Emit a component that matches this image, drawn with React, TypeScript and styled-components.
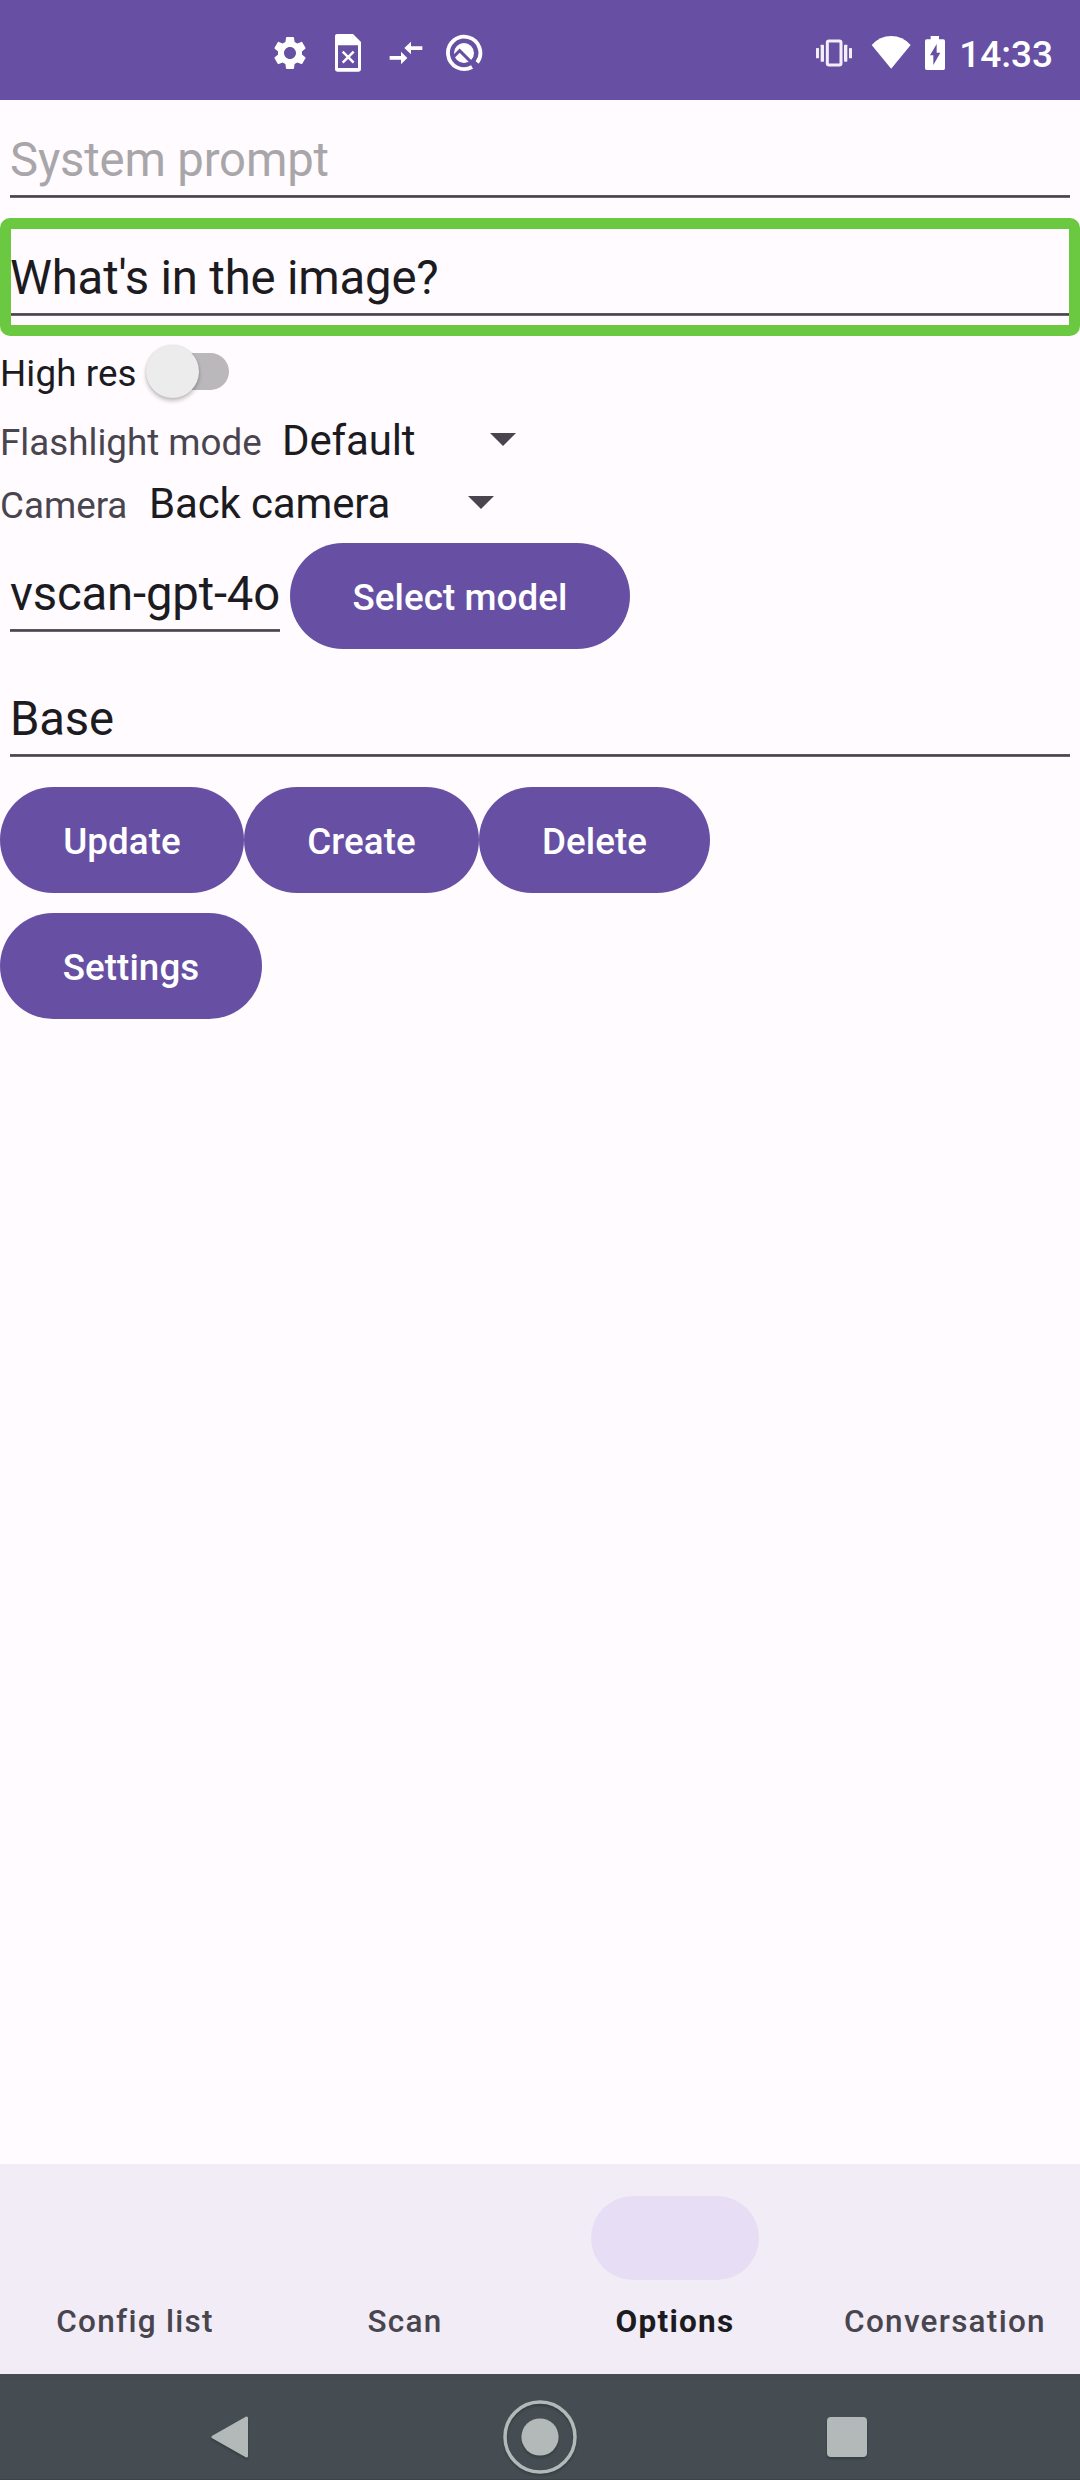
import React from "react";
import styled, { createGlobalStyle } from "styled-components";

const GlobalStyle = createGlobalStyle`
  *, *::before, *::after { box-sizing: border-box; }
  html, body { margin: 0; padding: 0; background: #fffbff; }
  body { font-family: Roboto, "Noto Sans", sans-serif; }
`;

const Screen = styled.div`
  width: 1080px;
  height: 2480px;
  display: flex;
  flex-direction: column;
  overflow: hidden;
  background: #fffbff;
  color: #1c1b1f;
`;

const StatusBar = styled.header`
  height: 100px;
  flex: none;
  display: flex;
  align-items: center;
  justify-content: space-between;
  padding: 6px 27px 0 270px;
  background: #6750a3;
  color: #fff;
`;

const StatusGroup = styled.div<{ $gap: number }>`
  display: flex;
  align-items: center;
  gap: ${(p) => p.$gap}px;
  svg { display: block; flex: none; }
`;

const Clock = styled.span`
  font-size: 37px;
  line-height: 44px;
  font-weight: 500;
  padding-top: 3px;
`;

const Form = styled.main`
  flex: 1;
  display: flex;
  flex-direction: column;
`;

const Field = styled.div<{ $width?: number; $hint?: boolean }>`
  flex: none;
  width: ${(p) => (p.$width ? `${p.$width}px` : "auto")};
  height: 98px;
  margin: 0 10px 20px;
  padding: 32px 0 0;
  font-size: 47.25px;
  line-height: 56px;
  letter-spacing: -0.16px;
  white-space: nowrap;
  color: ${(p) => (p.$hint ? "#a8a6a9" : "#1c1b1f")};
  background: linear-gradient(#5a5660 0 1px, #49454f 1px 2px, #6b6771 2px 3px) 0 95px / 100% 3px no-repeat;
`;

const Highlight = styled.div`
  position: relative;
  display: flex;
  flex-direction: column;
  &::after {
    content: "";
    position: absolute;
    inset: 0;
    border: 11px solid #6ac940;
    border-radius: 10px;
  }
`;

const SwitchRow = styled.label`
  height: 72px;
  flex: none;
  display: flex;
  align-items: flex-start;
  font-size: 36.75px;
  line-height: 75px;
  letter-spacing: 0.12px;
`;

const SwitchTrack = styled.span`
  width: 74px;
  height: 37px;
  margin: 17px 0 0 18px;
  border-radius: 19px;
  background: #bab8ba;
  display: flex;
  align-items: center;
`;

const SwitchThumb = styled.span`
  flex: none;
  width: 53px;
  height: 53px;
  margin-left: -9px;
  border-radius: 50%;
  background: #ececec;
  box-shadow: 0 3px 4px rgba(0, 0, 0, 0.24), 0 0 2px rgba(0, 0, 0, 0.12);
`;

const SpinnerRow = styled.div`
  height: 63px;
  flex: none;
  display: flex;
  align-items: flex-start;
`;

const SpinnerLabel = styled.span<{ $width: number }>`
  width: ${(p) => p.$width}px;
  font-size: 36.75px;
  line-height: 69px;
  color: #49454f;
  white-space: nowrap;
`;

const Spinner = styled.div<{ $width: number }>`
  width: ${(p) => p.$width}px;
  display: flex;
  justify-content: space-between;
  font-size: 42px;
  line-height: 66px;
  letter-spacing: -0.15px;
`;

const Caret = styled.span`
  margin-top: 25px;
  width: 26px;
  height: 13px;
  background: #49454f;
  clip-path: polygon(0 0, 100% 0, 50% 100%);
`;

const ModelRow = styled.div`
  height: 125px;
  flex: none;
  display: flex;
`;

const Button = styled.button<{ $width: number }>`
  flex: none;
  width: ${(p) => p.$width}px;
  height: 106px;
  padding: 3px 0 0;
  border: 0;
  border-radius: 53px;
  background: #6750a3;
  color: #fff;
  font-family: inherit;
  font-size: 36.75px;
  font-weight: 500;
  letter-spacing: 0.08px;
  line-height: 44px;
`;

const ModelButton = styled(Button)`
  margin-top: 9px;
`;

const ButtonRow = styled.div<{ $top: number }>`
  display: flex;
  margin-top: ${(p) => p.$top}px;
`;

const Tabs = styled.nav`
  flex: none;
  height: 210px;
  display: grid;
  grid-template-columns: repeat(4, 1fr);
  background: #f1ecf6;
`;

const Tab = styled.div<{ $active?: boolean }>`
  display: flex;
  flex-direction: column;
  align-items: center;
  padding-top: 32px;
  font-size: 31.5px;
  line-height: 39px;
  letter-spacing: 1.27px;
  white-space: nowrap;
  font-weight: ${(p) => (p.$active ? 700 : 500)};
  color: ${(p) => (p.$active ? "#1c1b1f" : "#49454f")};
`;

const Indicator = styled.span<{ $active?: boolean }>`
  width: 168px;
  height: 84px;
  margin-bottom: 22px;
  border-radius: 42px;
  background: ${(p) => (p.$active ? "#e7def6" : "transparent")};
`;

const SystemNav = styled.footer`
  flex: none;
  height: 106px;
  display: flex;
  align-items: center;
  justify-content: space-between;
  padding: 20px 210px 0 206px;
  background: #454d52;
  border-bottom: 1px solid #3d4448;
  svg {
    display: block;
    filter: drop-shadow(0 2px 1px rgba(0, 0, 0, 0.2));
  }
`;

const HomeButton = styled.div`
  margin-left: 4px;
`;

const tabs = ["Config list", "Scan", "Options", "Conversation"];

const GearIcon = () => (
  <svg width="40" height="40" viewBox="0 0 24 24" fill="#fff">
    <path d="M19.14 12.94c.04-.3.06-.61.06-.94 0-.32-.02-.64-.07-.94l2.03-1.58c.18-.14.23-.41.12-.61l-1.92-3.32c-.12-.22-.37-.29-.59-.22l-2.39.96c-.5-.38-1.03-.7-1.62-.94l-.36-2.54c-.04-.24-.24-.41-.48-.41h-3.84c-.24 0-.43.17-.47.41l-.36 2.54c-.59.24-1.13.57-1.62.94l-2.39-.96c-.22-.08-.47 0-.59.22L2.74 8.87c-.12.21-.08.47.12.61l2.03 1.58c-.05.3-.09.63-.09.94s.02.64.07.94l-2.03 1.58c-.18.14-.23.41-.12.61l1.92 3.32c.12.22.37.29.59.22l2.39-.96c.5.38 1.03.7 1.62.94l.36 2.54c.05.24.24.41.48.41h3.84c.24 0 .44-.17.47-.41l.36-2.54c.59-.24 1.13-.56 1.62-.94l2.39.96c.22.08.47 0 .59-.22l1.92-3.32c.12-.22.07-.47-.12-.61l-2.01-1.58zM12 15.6c-1.98 0-3.6-1.62-3.6-3.6s1.62-3.6 3.6-3.6 3.6 1.62 3.6 3.6-1.62 3.6-3.6 3.6z" />
  </svg>
);

const SimIcon = () => (
  <svg width="40" height="40" viewBox="234 99 120 120">
    <path
      fill="#fff"
      fillRule="evenodd"
      d="M261 102H309L333 126V208Q333 215 326 215H262Q255 215 255 208V108Q255 102 261 102ZM264 136V204H324V136Z"
    />
    <path d="M278 155L311 188M311 155L278 188" stroke="#fff" strokeWidth="7.5" fill="none" />
  </svg>
);

const ArrowsIcon = () => (
  <svg width="40" height="40" viewBox="408 99 120 120" fill="#fff">
    <path d="M463 144L483 125V139H517V150H483V163Z" />
    <path d="M472 174L453 193V179H419V168H453V155Z" />
  </svg>
);

const RingIcon = () => (
  <svg width="40" height="40" viewBox="582 98 120 120">
    <path d="M681.5 186.500A48.500 48.500 0 1 0 666.200 200" fill="none" stroke="#fff" strokeWidth="11.500" />
    <circle cx="642" cy="158" r="30" fill="#fff" />
    <path d="M608 172L629 151L677 199" fill="none" stroke="#6750a3" strokeWidth="9" />
  </svg>
);

const VibrateIcon = () => (
  <svg width="40" height="40" viewBox="39 96 120 120" fill="#f3effa">
    <rect x="79" y="120" width="41" height="72" rx="5" fill="none" stroke="#f3effa" strokeWidth="9" />
    <rect x="59" y="131" width="10" height="51" rx="2" />
    <rect x="45" y="141" width="9" height="31" rx="2" />
    <rect x="129" y="131" width="10" height="51" rx="2" />
    <rect x="144" y="141" width="9" height="31" rx="2" />
  </svg>
);

const WifiIcon = () => (
  <svg width="40" height="40" viewBox="211 96 120 120" fill="#fff">
    <path d="M271.500 203L213 132Q237 105 271.500 105T330 132Z" />
  </svg>
);

const BatteryIcon = () => (
  <svg width="22" height="40" viewBox="375 96 66 120">
    <path
      fill="#fff"
      fillRule="evenodd"
      d="M395 105H420V115H433Q438 115 438 120V202Q438 207 433 207H383Q378 207 378 202V120Q378 115 383 115H395ZM413 129L393 163H403V192L424 155H413Z"
    />
  </svg>
);

export default function App() {
  return (
    <>
      <GlobalStyle />
      <Screen>
        <StatusBar>
          <StatusGroup $gap={18}>
            <GearIcon />
            <SimIcon />
            <ArrowsIcon />
            <RingIcon />
          </StatusGroup>
          <StatusGroup $gap={13}>
            <StatusGroup $gap={17}>
              <VibrateIcon />
              <WifiIcon />
            </StatusGroup>
            <BatteryIcon />
            <Clock>14:33</Clock>
          </StatusGroup>
        </StatusBar>

        <Form>
          <Field $hint>System prompt</Field>
          <Highlight>
            <Field>What's in the image?</Field>
          </Highlight>
          <SwitchRow>
            High res
            <SwitchTrack>
              <SwitchThumb />
            </SwitchTrack>
          </SwitchRow>
          <SpinnerRow>
            <SpinnerLabel $width={282}>Flashlight mode</SpinnerLabel>
            <Spinner $width={234}>
              Default
              <Caret />
            </Spinner>
          </SpinnerRow>
          <SpinnerRow>
            <SpinnerLabel $width={149}>Camera</SpinnerLabel>
            <Spinner $width={345}>
              Back camera
              <Caret />
            </Spinner>
          </SpinnerRow>
          <ModelRow>
            <Field $width={270}>vscan-gpt-4o</Field>
            <ModelButton $width={340}>Select model</ModelButton>
          </ModelRow>
          <Field>Base</Field>
          <ButtonRow $top={10}>
            <Button $width={244}>Update</Button>
            <Button $width={235}>Create</Button>
            <Button $width={231}>Delete</Button>
          </ButtonRow>
          <ButtonRow $top={20}>
            <Button $width={262}>Settings</Button>
          </ButtonRow>
        </Form>

        <Tabs>
          {tabs.map((name) => (
            <Tab key={name} $active={name === "Options"}>
              <Indicator $active={name === "Options"} />
              {name}
            </Tab>
          ))}
        </Tabs>

        <SystemNav>
          <svg width="46" height="46" viewBox="0 0 46 46">
            <path d="M7 23L40.500 4V42Z" fill="#b3b8b9" stroke="#b3b8b9" strokeWidth="3" strokeLinejoin="round" />
          </svg>
          <HomeButton>
            <svg width="76" height="76" viewBox="0 0 76 76">
              <circle cx="38" cy="38" r="35" fill="none" stroke="#b3b8b9" strokeWidth="3.500" />
              <circle cx="38" cy="38" r="18.600" fill="#b3b8b9" />
            </svg>
          </HomeButton>
          <svg width="46" height="46" viewBox="0 0 46 46">
            <rect x="3" y="3" width="40" height="40" rx="4" fill="#b3b8b9" />
          </svg>
        </SystemNav>
      </Screen>
    </>
  );
}
